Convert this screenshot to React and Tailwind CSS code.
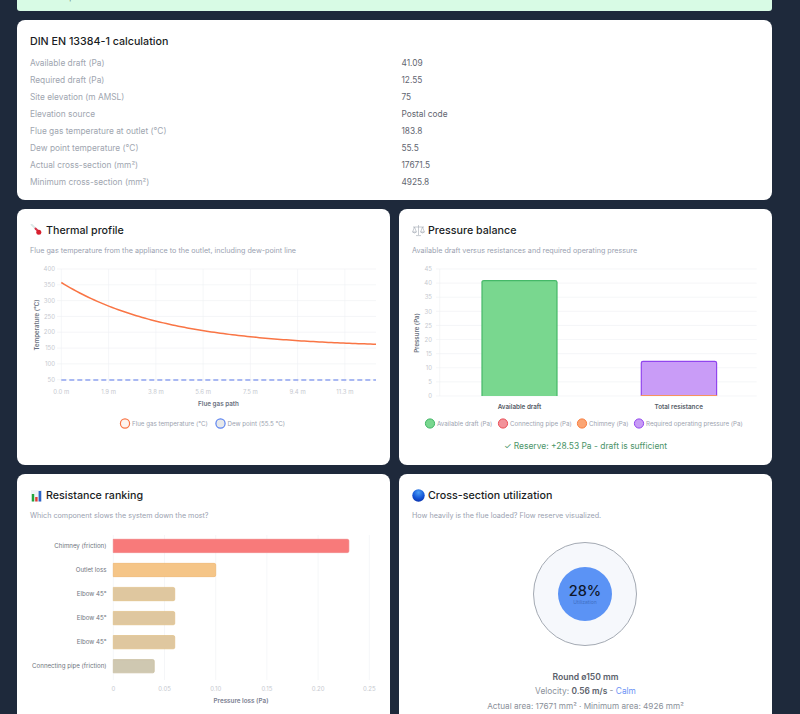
import React from "react";

const font = { fontFamily: "Inter, sans-serif" };
const GRID = "#eef0f3";

function Thermo() {
  return (
    <svg width="13" height="13" viewBox="0 0 13 13" className="shrink-0">
      <path d="M1.5 0.5 L7 6" stroke="#d9e8e6" strokeWidth="1.8" strokeLinecap="round" />
      <path d="M5.5 4.5 L8.5 7.5" stroke="#d8344a" strokeWidth="2" strokeLinecap="round" />
      <circle cx="8.8" cy="8.2" r="2.5" fill="#d8202f" />
    </svg>
  );
}
function Scales() {
  return (
    <svg width="13" height="13" viewBox="0 0 13 13" className="shrink-0" fill="none" stroke="#a3aab3" strokeWidth="0.6">
      <path d="M6.5 1 V11 M4 11.6 H9 M1 3 H12" />
      <path d="M2.5 3 L0.6 8 H4.4 Z M10.5 3 L8.6 8 H12.4 Z" />
      <path d="M0.6 8 Q2.5 10 4.4 8 M8.6 8 Q10.5 10 12.4 8" fill="#d5d9de" />
    </svg>
  );
}
function Bars() {
  return (
    <svg width="13" height="13" viewBox="0 0 13 13" className="shrink-0">
      <rect x="1" y="1" width="11" height="11.5" fill="#eef1f6" />
      <rect x="1.8" y="5" width="2.4" height="7.5" fill="#22a33c" />
      <rect x="5.2" y="8" width="2.4" height="4.5" fill="#e23b33" />
      <rect x="8.6" y="2" width="2.6" height="10.5" fill="#2b63c9" />
    </svg>
  );
}
function Ball() {
  return (
    <svg width="13" height="13" viewBox="0 0 13 13" className="shrink-0">
      <defs>
        <radialGradient id="ball" cx="0.5" cy="0.25" r="0.8">
          <stop offset="0" stopColor="#4a9cf5" />
          <stop offset="0.6" stopColor="#1455d6" />
          <stop offset="1" stopColor="#0a2fa8" />
        </radialGradient>
      </defs>
      <circle cx="6.5" cy="6.5" r="6.2" fill="url(#ball)" />
    </svg>
  );
}

function Card({ icon, title, sub, children, className = "" }) {
  return (
    <section className={`bg-white rounded-[8px] px-[13px] pt-[14.5px] overflow-hidden ${className}`}>
      <h3 className="flex items-center gap-[3px] text-[10.7px] leading-[14px] font-medium text-[#1a1d24]">
        {icon}
        <span>{title}</span>
      </h3>
      <p className="mt-[8px] text-[7.2px] leading-[10px] text-[#9a9fb0]">{sub}</p>
      {children}
    </section>
  );
}

function ThermalChart() {
  const xs = [61.3, 108.6, 155.9, 203.1, 250.4, 297.6, 344.9];
  const lbl = ["0.0 m", "1.9 m", "3.8 m", "5.6 m", "7.5 m", "9.4 m", "11.3 m"];
  const ticks = [400, 350, 300, 250, 200, 150, 100, 50];
  const y = (t) => 379.7 - (t - 50) * 0.3163;
  let d = "";
  for (let x = 61.3; x <= 376.3; x += 3) {
    d += `${d ? "L" : "M"}${x.toFixed(1)} ${(347.5 - 65 * Math.exp(-(x - 61.3) / 105)).toFixed(2)} `;
  }
  return (
    <svg viewBox="30 262 346 170" width="346" height="170" className="block mt-[6.5px]" style={font}>
      {ticks.map((t) => (
        <g key={t}>
          <line x1="57" x2="376" y1={y(t)} y2={y(t)} stroke={GRID} strokeWidth="0.6" />
          <text x="55" y={y(t) + 2.2} textAnchor="end" fontSize="6" fill="#c6c9cf">{t}</text>
        </g>
      ))}
      {xs.map((x, i) => (
        <g key={x}>
          <line x1={x} x2={x} y1="269" y2="383" stroke={GRID} strokeWidth="0.6" />
          <text x={x} y="394" textAnchor="middle" fontSize="6" fill="#c6c9cf">{lbl[i]}</text>
        </g>
      ))}
      <text transform="translate(38.5 325) rotate(-90)" textAnchor="middle" fontSize="6.1" fontWeight="600" fill="#6b7280">Temperature (°C)</text>
      <text x="218.5" y="406" textAnchor="middle" fontSize="6.3" fontWeight="600" fill="#6b7280">Flue gas path</text>
      <line x1="61.3" x2="376" y1="380" y2="380" stroke="#8ea2ef" strokeWidth="1.5" strokeDasharray="5 3" />
      <path d={d} fill="none" stroke="#f97545" strokeWidth="1.5" />
      <circle cx="125" cy="423.5" r="4.6" fill="#fdf3ee" stroke="#f97545" strokeWidth="1.2" />
      <text x="132" y="425.7" fontSize="6.2" fill="#9ca3af">Flue gas temperature (°C)</text>
      <circle cx="220.5" cy="423.5" r="4.6" fill="#e6e8ea" stroke="#5b83f0" strokeWidth="1.2" />
      <text x="227.5" y="425.7" fontSize="6.2" fill="#9ca3af">Dew point (55.5 °C)</text>
    </svg>
  );
}

function PressureChart() {
  const ticks = [45, 40, 35, 30, 25, 20, 15, 10, 5, 0];
  const y = (t) => 396 - t * 2.822;
  const legend = [
    [430, "#79d78f", "#3fb564", "Available draft (Pa)"],
    [503, "#f2929a", "#ea4d55", "Connecting pipe (Pa)"],
    [582, "#fba574", "#f97c3c", "Chimney (Pa)"],
    [639, "#c79bf5", "#9145ee", "Required operating pressure (Pa)"],
  ];
  return (
    <svg viewBox="412 262 346 170" width="346" height="170" className="block mt-[6.5px]" style={font}>
      {ticks.map((t) => (
        <g key={t}>
          <line x1="436" x2="756.7" y1={y(t)} y2={y(t)} stroke={GRID} strokeWidth="0.6" />
          <text x="432" y={y(t) + 2.2} textAnchor="end" fontSize="6" fill="#c6c9cf">{t}</text>
        </g>
      ))}
      <line x1="439.7" x2="439.7" y1="269" y2="396" stroke={GRID} strokeWidth="0.6" />
      <text transform="translate(418.5 333) rotate(-90)" textAnchor="middle" fontSize="6.1" fontWeight="600" fill="#6b7280">Pressure (Pa)</text>
      <path d="M482 396 V282.3 Q482 280.6 484 280.6 H555 Q557 280.6 557 282.3 V396" fill="#79d78f" stroke="#45b868" strokeWidth="1.2" />
      <path d="M641.3 396 V363 Q641.3 361.3 643 361.3 H714.7 Q716.6 361.3 716.6 363 V396" fill="#c99cf7" stroke="#9145ee" strokeWidth="1.2" />
      <line x1="641" x2="717" y1="395.5" y2="395.5" stroke="#f7925f" strokeWidth="1" />
      <text x="519.5" y="409" textAnchor="middle" fontSize="6.3" fontWeight="600" fill="#555b66">Available draft</text>
      <text x="678.7" y="409" textAnchor="middle" fontSize="6.3" fontWeight="600" fill="#555b66">Total resistance</text>
      {legend.map(([x, f, s, t]) => (
        <g key={t}>
          <circle cx={x} cy="423.5" r="4.6" fill={f} stroke={s} strokeWidth="1" />
          <text x={x + 7} y="425.7" fontSize="6.2" fill="#9ca3af">{t}</text>
        </g>
      ))}
    </svg>
  );
}

function RankingChart() {
  const rows = [
    ["Chimney (friction)", 0.23, "#f87a7a", "#f0787a"],
    ["Outlet loss", 0.1, "#f5c587", "#eeb56f"],
    ["Elbow 45°", 0.06, "#dfc79f", "#e0bf85"],
    ["Elbow 45°", 0.06, "#dfc79f", "#e0bf85"],
    ["Elbow 45°", 0.06, "#dfc79f", "#e0bf85"],
    ["Connecting pipe (friction)", 0.04, "#cfc8b1", "#c8bd9e"],
  ];
  const px = (v) => 113.3 + v * 1024;
  const t = [0, 0.05, 0.1, 0.15, 0.2, 0.25];
  const lbl = ["0", "0.05", "0.10", "0.15", "0.20", "0.25"];
  return (
    <svg viewBox="30 526 346 180" width="346" height="180" className="block mt-[5.5px]" style={font}>
      {t.map((v, i) => (
        <g key={v}>
          <line x1={px(v)} x2={px(v)} y1="535" y2="680" stroke={GRID} strokeWidth="0.6" />
          <text x={px(v)} y="690.5" textAnchor="middle" fontSize="6" fill="#c6c9cf">{lbl[i]}</text>
        </g>
      ))}
      {rows.map(([name, v, f, s], i) => {
        const top = 539.3 + i * 24.05;
        return (
          <g key={i}>
            <text x="106.5" y={top + 8.8} textAnchor="end" fontSize="6.15" fill="#6f7580">{name}</text>
            <path d={`M113.3 ${top} H${px(v) - 1.5} Q${px(v)} ${top} ${px(v)} ${top + 1.5} V${top + 11.8} Q${px(v)} ${top + 13.3} ${px(v) - 1.5} ${top + 13.3} H113.3 Z`} fill={f} stroke={s} strokeWidth="0.7" />
          </g>
        );
      })}
      <text x="241" y="702.5" textAnchor="middle" fontSize="6.3" fontWeight="600" fill="#7b8090">Pressure loss (Pa)</text>
    </svg>
  );
}

const rows = [
  ["Available draft (Pa)", "41.09"],
  ["Required draft (Pa)", "12.55"],
  ["Site elevation (m AMSL)", "75"],
  ["Elevation source", "Postal code"],
  ["Flue gas temperature at outlet (°C)", "183.8"],
  ["Dew point temperature (°C)", "55.5"],
  ["Actual cross-section (mm²)", "17671.5"],
  ["Minimum cross-section (mm²)", "4925.8"],
];

export default function App() {
  return (
    <div className="h-[714px] overflow-hidden bg-[#1e293b] pl-[17px] pr-[28px] flex flex-col gap-[9px]" style={font}>
      <div className="h-[11px] shrink-0 bg-[#d8fbe5] rounded-b-[3px] overflow-hidden px-[9px]">
        <p className="-mt-[8px] text-[8px] leading-[10px] text-[#6b8f7a]">calculation passed.</p>
      </div>

      <section className="h-[180px] shrink-0 bg-white rounded-[8px] px-[13px] pt-[14.5px]">
        <h3 className="text-[10.7px] leading-[14px] font-medium text-[#1a1d24]">DIN EN 13384-1 calculation</h3>
        <dl className="mt-[6px] grid grid-cols-[371.5px_1fr]">
          {rows.map(([k, v]) => (
            <React.Fragment key={k}>
              <dt className="h-[17px] text-[8.35px] leading-[17px] text-[#a0a6b0]">{k}</dt>
              <dd className="h-[17px] text-[8.3px] leading-[17px] text-[#5f6570]">{v}</dd>
            </React.Fragment>
          ))}
        </dl>
      </section>

      <div className="grid grid-cols-2 gap-[9px] shrink-0">
        <Card className="h-[256px]" icon={<Thermo />} title="Thermal profile" sub="Flue gas temperature from the appliance to the outlet, including dew-point line">
          <ThermalChart />
        </Card>
        <Card className="h-[256px]" icon={<Scales />} title="Pressure balance" sub="Available draft versus resistances and required operating pressure">
          <PressureChart />
          <p className="mt-[8px] text-center text-[8.45px] leading-[12px] text-[#4a9468]">✓ Reserve: +28.53 Pa - draft is sufficient</p>
        </Card>
      </div>

      <div className="grid grid-cols-2 gap-[9px] shrink-0">
        <Card className="h-[260px]" icon={<Bars />} title="Resistance ranking" sub="Which component slows the system down the most?">
          <RankingChart />
        </Card>
        <Card className="h-[260px]" icon={<Ball />} title="Cross-section utilization" sub="How heavily is the flue loaded? Flow reserve visualized.">
          <div className="mt-[21.5px] pr-[1px] flex justify-center">
            <div className="w-[104px] h-[104px] rounded-full bg-[#f6f8fc] border border-[#a4aab3] flex items-center justify-center">
              <div className="w-[54px] h-[54px] rounded-full bg-[#5b93f5] flex flex-col items-center justify-center">
                <span className="text-[14.5px] leading-[16px] font-medium text-[#0f172a]">28%</span>
                <span className="text-[5px] leading-[7px] text-[#3f6fc4]">Utilization</span>
              </div>
            </div>
          </div>
          <div className="mt-[23.5px] text-center text-[8.2px] leading-[14.6px] text-[#8a9099]">
            <p className="text-[8.6px] font-semibold text-[#5b616b]">Round ø150 mm</p>
            <p className="text-[8.35px]">Velocity: <span className="font-semibold text-[#5b616b]">0.56 m/s</span> - <span className="text-[#6b93f5]">Calm</span></p>
            <p>Actual area: 17671 mm² · Minimum area: 4926 mm²</p>
          </div>
        </Card>
      </div>
    </div>
  );
}
